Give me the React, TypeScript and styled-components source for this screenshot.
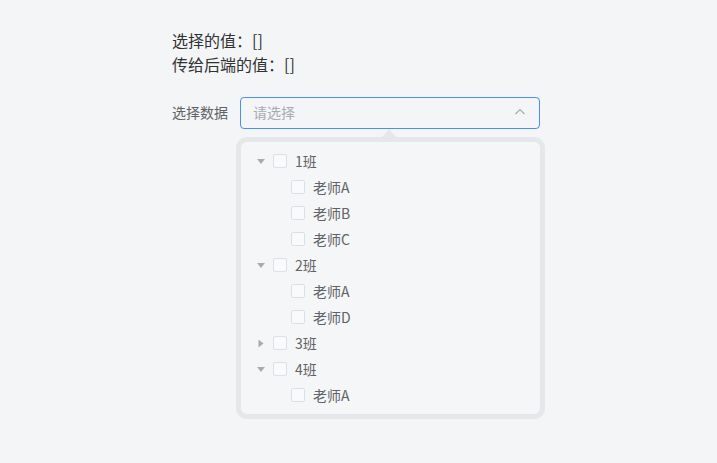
import React from "react";
import styled, { createGlobalStyle } from "styled-components";

const Global = createGlobalStyle`
  html, body { margin: 0; padding: 0; background: #f4f5f7; }
  body { font-family: "Noto Sans CJK SC", "Noto Sans", sans-serif; }
`;

const Page = styled.div`
  padding: 28px 0 40px 172px;
  display: flex;
  flex-direction: column;
`;

const ValueLine = styled.div`
  font-size: 16px;
  line-height: 24px;
  color: #303133;
`;

const FormRow = styled.div`
  display: flex;
  align-items: flex-start;
  gap: 12px;
  margin-top: 21px;
`;

const Label = styled.div`
  font-size: 14px;
  line-height: 30px;
  color: #606266;
  width: 56px;
`;

const SelectWrap = styled.div`
  position: relative;
  width: 300px;
  display: flex;
  flex-direction: column;
`;

const Input = styled.div`
  box-sizing: border-box;
  height: 32px;
  border: 1px solid #4a90f0;
  border-radius: 4px;
  display: flex;
  align-items: center;
  justify-content: space-between;
  padding: 0 12px 2px;
`;

const Placeholder = styled.span`
  font-size: 14px;
  color: #a8abb2;
`;

const Dropdown = styled.div`
  position: relative;
  margin: 13px 0 0 1px;
  width: 299px;
  box-sizing: border-box;
  background: #f5f6f8;
  border-radius: 6px;
  box-shadow: 0 0 0 5px #e6e7ea;
  padding: 6px 0;
`;

const Arrow = styled.div`
  position: absolute;
  top: -13px;
  left: 141px;
  width: 0;
  height: 0;
  border-left: 7px solid transparent;
  border-right: 7px solid transparent;
  border-bottom: 8px solid #e6e7ea;
`;

const Row = styled.div<{ $level: number }>`
  display: flex;
  align-items: center;
  height: 26px;
  padding-left: ${(p) => 8 + p.$level * 18}px;
  font-size: 14px;
  color: #606266;
`;

const Caret = styled.span<{ $open?: boolean; $hidden?: boolean }>`
  width: 24px;
  height: 24px;
  display: flex;
  align-items: center;
  justify-content: center;
  visibility: ${(p) => (p.$hidden ? "hidden" : "visible")};
  &::before {
    content: "";
    width: 0;
    height: 0;
    border-left: 4px solid transparent;
    border-right: 4px solid transparent;
    border-top: 5px solid #a8abb2;
    transform: ${(p) => (p.$open ? "none" : "rotate(-90deg)")};
  }
`;

const Box = styled.span`
  box-sizing: border-box;
  width: 14px;
  height: 14px;
  border: 1px solid #dcdfe6;
  border-radius: 2px;
  background: #f9fafb;
  margin-right: 8px;
`;

type TreeNode = { label: string; children?: TreeNode[]; open?: boolean };

const data: TreeNode[] = [
  { label: "1班", open: true, children: [{ label: "老师A" }, { label: "老师B" }, { label: "老师C" }] },
  { label: "2班", open: true, children: [{ label: "老师A" }, { label: "老师D" }] },
  { label: "3班", open: false, children: [{ label: "老师E" }] },
  { label: "4班", open: true, children: [{ label: "老师A" }] },
];

type Flat = { key: string; label: string; level: number; hasKids: boolean; open: boolean };

function flatten(nodes: TreeNode[], level: number, prefix: string): Flat[] {
  const out: Flat[] = [];
  nodes.forEach((n, i) => {
    const hasKids = !!n.children && n.children.length > 0;
    const key = `${prefix}-${i}`;
    out.push({ key, label: n.label, level, hasKids, open: !!n.open });
    if (hasKids && n.open && n.children) out.push(...flatten(n.children, level + 1, key));
  });
  return out;
}

const rows = flatten(data, 0, "n");

export default function App() {
  return (
    <>
      <Global />
      <Page>
        <ValueLine>选择的值：[]</ValueLine>
        <ValueLine>传给后端的值：[]</ValueLine>
        <FormRow>
          <Label>选择数据</Label>
          <SelectWrap>
            <Input>
              <Placeholder>请选择</Placeholder>
              <svg width="14" height="14" viewBox="0 0 14 14">
                <path d="M2.5 9 L7 4.5 L11.5 9" fill="none" stroke="#a8abb2" strokeWidth="1.2" />
              </svg>
            </Input>
            <Dropdown>
              <Arrow />
              {rows.map((r) => (
                <Row key={r.key} $level={r.level}>
                  <Caret $open={r.open} $hidden={!r.hasKids} />
                  <Box />
                  <span>{r.label}</span>
                </Row>
              ))}
            </Dropdown>
          </SelectWrap>
        </FormRow>
      </Page>
    </>
  );
}
